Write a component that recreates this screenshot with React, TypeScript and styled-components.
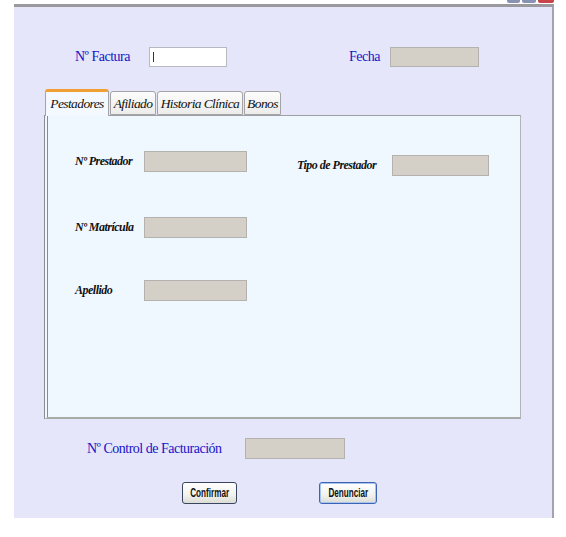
import React from "react";
import styled, { createGlobalStyle } from "styled-components";

const Global = createGlobalStyle`
  html, body { margin: 0; padding: 0; background: #ffffff; }
  body { font-family: "Liberation Serif", serif; }
`;

const TitleStrip = styled.div`
  width: 554px;
  height: 4px;
  display: flex;
  justify-content: flex-end;
  align-items: flex-start;
  gap: 2px;
`;

const TitleBtn = styled.div<{ $w: number; $red?: boolean }>`
  width: ${(p) => p.$w}px;
  height: 3px;
  border-radius: 0 0 2px 2px;
  background: ${(p) => (p.$red ? "#c8444a" : "#8893b4")};
`;

const Window = styled.div`
  margin-left: 14px;
  width: 538px;
  height: 511px;
  background: #e6e6fa;
  border-top: 3px solid #9a9a9e;
  border-right: 2px solid #a2a2b0;
  display: flex;
  flex-direction: column;
`;

const Row = styled.div<{ $mt: number }>`
  display: flex;
  align-items: center;
  margin-top: ${(p) => p.$mt}px;
`;

const BlueLabel = styled.span<{ $ml: number; $w?: number }>`
  margin-left: ${(p) => p.$ml}px;
  ${(p) => (p.$w ? `width: ${p.$w}px;` : "")}
  font-family: "Liberation Serif", serif;
  font-size: 14px;
  letter-spacing: -0.5px;
  color: #1414c8;
  white-space: nowrap;
`;

const Input = styled.div<{ $ml: number; $w: number; $h: number; $white?: boolean }>`
  margin-left: ${(p) => p.$ml}px;
  width: ${(p) => p.$w}px;
  height: ${(p) => p.$h}px;
  box-sizing: border-box;
  background: ${(p) => (p.$white ? "#ffffff" : "#d4d0c8")};
  border: 1px solid ${(p) => (p.$white ? "#b8b8c0" : "#b4b2ae")};
  display: flex;
  align-items: center;
`;

const Caret = styled.span`
  margin-left: 3px;
  width: 1px;
  height: 10px;
  background: #333;
`;

const TabBar = styled.div`
  display: flex;
  align-items: flex-end;
  margin-top: 22px;
  margin-left: 31px;
  gap: 1px;
  position: relative;
  z-index: 1;
`;

const Tab = styled.div<{ $active?: boolean; $w: number }>`
  width: ${(p) => p.$w}px;
  height: ${(p) => (p.$active ? 27 : 24)}px;
  box-sizing: border-box;
  display: flex;
  align-items: center;
  justify-content: center;
  font-family: "Liberation Serif", serif;
  font-style: italic;
  font-size: 13.5px;
  letter-spacing: -0.6px;
  color: #111;
  border: 1px solid #a4a4a8;
  border-bottom: ${(p) => (p.$active ? "none" : "1px solid #a4a4a8")};
  border-top: ${(p) => (p.$active ? "3px solid #f0a030" : "1px solid #a4a4a8")};
  border-radius: 3px 3px 0 0;
  background: ${(p) =>
    p.$active ? "#f4f9ff" : "linear-gradient(#fcfcfc, #ececea)"};
  margin-bottom: ${(p) => (p.$active ? "-1px" : "0")};
  padding-top: ${(p) => (p.$active ? "0" : "1px")};
`;

const Panel = styled.div`
  margin-left: 30px;
  width: 477px;
  height: 304px;
  box-sizing: border-box;
  background: #f0f8ff;
  border-top: 1px solid #a0a0a4;
  border-right: 1px solid #b4b4b8;
  border-bottom: 2px solid #a8aca8;
  border-left: 4px double #8c8c90;
  display: flex;
  align-items: flex-start;
  padding: 35px 0 0 27px;
`;

const Column = styled.div<{ $ml?: number; $mt?: number }>`
  display: flex;
  flex-direction: column;
  margin-left: ${(p) => p.$ml ?? 0}px;
  margin-top: ${(p) => p.$mt ?? 0}px;
`;

const Field = styled.div<{ $cols: string; $mt?: number }>`
  display: grid;
  grid-template-columns: ${(p) => p.$cols};
  align-items: center;
  margin-top: ${(p) => p.$mt ?? 0}px;
`;

const ScriptLabel = styled.span`
  font-family: "Liberation Serif", serif;
  font-style: italic;
  font-weight: bold;
  font-size: 12px;
  letter-spacing: -0.5px;
  color: #111;
  white-space: nowrap;
`;

const Box = styled.div<{ $w: number }>`
  width: ${(p) => p.$w}px;
  height: 21px;
  box-sizing: border-box;
  background: #d4d0c8;
  border: 1px solid #b4b2ae;
`;

const Button = styled.button<{ $ml: number; $w: number; $focus?: boolean }>`
  margin-left: ${(p) => p.$ml}px;
  width: ${(p) => p.$w}px;
  height: 22px;
  box-sizing: border-box;
  padding: 0;
  display: flex;
  align-items: center;
  justify-content: center;
  border: 1px solid ${(p) => (p.$focus ? "#3c64b4" : "#3a4660")};
  border-radius: 3px;
  background: linear-gradient(#ffffff, #f2f2ee 60%, #dcdcd6);
  box-shadow: ${(p) => (p.$focus ? "inset 0 0 0 1px #a8c4f0" : "none")};
`;

const ButtonText = styled.span`
  display: inline-block;
  font-family: "Liberation Sans", sans-serif;
  font-weight: bold;
  font-size: 12px;
  color: #111;
  transform: scaleX(0.68);
  white-space: nowrap;
`;

export default function App() {
  return (
    <>
      <Global />
      <TitleStrip>
        <TitleBtn $w={13} />
        <TitleBtn $w={14} />
        <TitleBtn $w={16} $red />
      </TitleStrip>
      <Window>
        <Row $mt={40}>
          <BlueLabel $ml={61} $w={74}>Nº Factura</BlueLabel>
          <Input $ml={0} $w={78} $h={20} $white>
            <Caret />
          </Input>
          <BlueLabel $ml={122} $w={41}>Fecha</BlueLabel>
          <Input $ml={0} $w={89} $h={20} />
        </Row>
        <TabBar>
          <Tab $active $w={64}>Pestadores</Tab>
          <Tab $w={46}>Afiliado</Tab>
          <Tab $w={86}>Historia Clínica</Tab>
          <Tab $w={37}>Bonos</Tab>
        </TabBar>
        <Panel>
          <Column>
            <Field $cols="69px 103px">
              <ScriptLabel>Nº Prestador</ScriptLabel>
              <Box $w={103} />
            </Field>
            <Field $cols="69px 103px" $mt={45}>
              <ScriptLabel>Nº Matrícula</ScriptLabel>
              <Box $w={103} />
            </Field>
            <Field $cols="69px 103px" $mt={42}>
              <ScriptLabel>Apellido</ScriptLabel>
              <Box $w={103} />
            </Field>
          </Column>
          <Column $ml={50} $mt={4}>
            <Field $cols="95px 97px">
              <ScriptLabel>Tipo de Prestador</ScriptLabel>
              <Box $w={97} />
            </Field>
          </Column>
        </Panel>
        <Row $mt={19}>
          <BlueLabel $ml={73} $w={158}>Nº Control de Facturación</BlueLabel>
          <Input $ml={0} $w={100} $h={21} />
        </Row>
        <Row $mt={23}>
          <Button $ml={168} $w={55}><ButtonText>Confirmar</ButtonText></Button>
          <Button $ml={82} $w={58} $focus><ButtonText>Denunciar</ButtonText></Button>
        </Row>
      </Window>
    </>
  );
}
